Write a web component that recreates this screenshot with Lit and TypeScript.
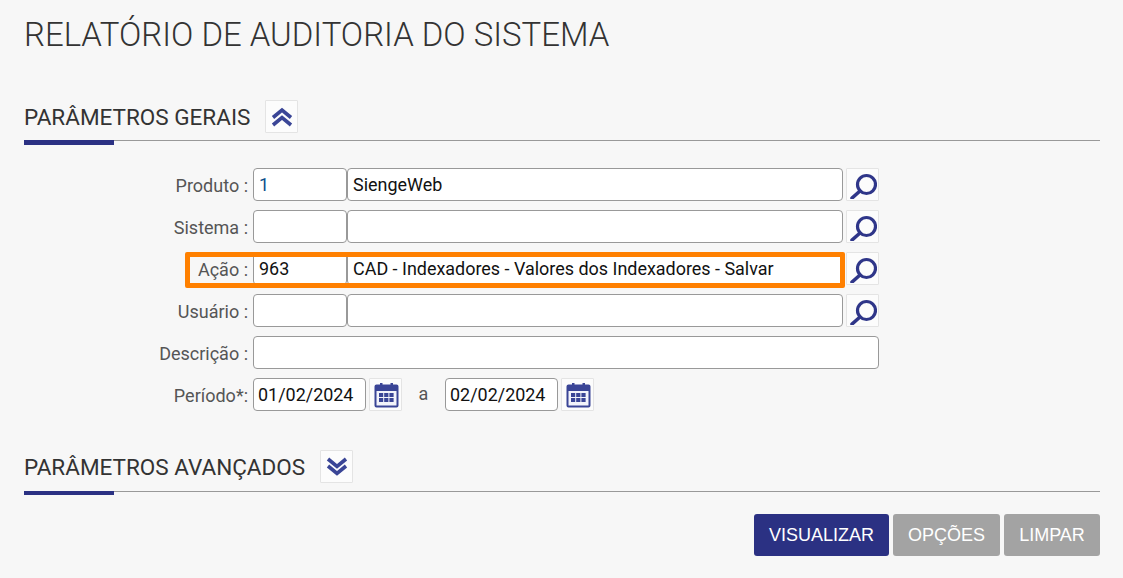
import { LitElement, html, css, svg } from "lit";
import { customElement } from "lit/decorators.js";

const search = svg`<svg width="28" height="28" viewBox="0 0 28 28"><circle cx="17.500" cy="13.500" r="9" fill="none" stroke="#2f3689" stroke-width="3.200"/><path d="M11 20 L3 27" stroke="#2f3689" stroke-width="3.600" stroke-linecap="round"/></svg>`;
const cal = svg`<svg width="28" height="28" viewBox="0 0 28 28"><rect x="3.500" y="4.500" width="22" height="21" rx="1" fill="#f2f3fa" stroke="#3a4596" stroke-width="2"/><rect x="3.500" y="4.500" width="22" height="5.500" fill="#3a4596"/><rect x="8" y="2" width="2.500" height="5" fill="#3a4596"/><rect x="18.500" y="2" width="2.500" height="5" fill="#3a4596"/><g fill="#3a4596"><rect x="7" y="12" width="4.200" height="4"/><rect x="12.200" y="12" width="4.200" height="4"/><rect x="17.400" y="12" width="4.200" height="4"/><rect x="7" y="17" width="4.200" height="4"/><rect x="12.200" y="17" width="4.200" height="4"/><rect x="17.400" y="17" width="4.200" height="4"/></g></svg>`;
const up = svg`<svg width="22" height="22" viewBox="0 0 22 22" fill="none" stroke="#3a4596" stroke-width="3.600"><path d="M2 11.500 L11 4 L20 11.500"/><path d="M2 19 L11 11.500 L20 19"/></svg>`;
const down = svg`<svg width="22" height="22" viewBox="0 0 22 22" fill="none" stroke="#3a4596" stroke-width="3.600"><path d="M2 3 L11 10.500 L20 3"/><path d="M2 10 L11 17.500 L20 10"/></svg>`;

@customElement("app-root")
export class AppRoot extends LitElement {
  static styles = css`
    :host { display: block; width: 1123px; height: 578px; background: #f7f7f7; font-family: Roboto, sans-serif; overflow: hidden; box-sizing: border-box; padding: 0 23px 0 24px; }
    h1 { margin: 0; padding-top: 16px; height: 87px; box-sizing: border-box; font-weight: 300; font-size: 32.950px; line-height: 38px; color: #333; white-space: nowrap; }
    .sec { display: flex; align-items: flex-start; gap: 15px; height: 40px; border-bottom: 1px solid #999; position: relative; margin-top: 13px; }
    .sec h2 { margin: 0; font-weight: 400; font-size: 22.500px; color: #333; line-height: 34px; white-space: nowrap; }
    .sec::after { content: ""; position: absolute; left: 0; bottom: -5px; width: 90px; height: 5px; background: #2b3183; }
    .icon { width: 33px; height: 33px; box-sizing: border-box; border: 1px solid #e4e4e4; background: #fcfcfc; display: flex; align-items: center; justify-content: center; flex: none; border-radius: 1px; }
    .form { display: grid; grid-template-columns: 229px auto; row-gap: 9px; margin-top: 27px; justify-content: start; }
    label { justify-self: end; padding-right: 5px; font-size: 18px; line-height: 35px; height: 33px; color: #555; white-space: nowrap; }
    .row { display: flex; height: 33px; align-items: stretch; position: relative; }
    .in { box-sizing: border-box; height: 33px; background: #fff; border: 1px solid #999; border-radius: 4px; padding-left: 5px; font-size: 17.960px; line-height: 31px; color: #111; white-space: nowrap; overflow: hidden; }
    .code { width: 94px; }
    .name { width: 496px; }
    .desc { width: 626px; }
    .date { width: 113px; padding-left: 4px; }
    .blue { color: #0b4f8a; }
    .row .icon { margin-left: 3px; }
    .a { width: 43px; text-align: center; font-size: 18px; line-height: 31px; color: #555; }
    .hl { position: absolute; left: -68px; top: 0; width: 660px; height: 36px; box-sizing: border-box; border: 5px solid #ff8000; border-radius: 2px; pointer-events: none; }
    .actions { display: flex; justify-content: flex-end; gap: 4px; margin-top: 22px; }
    .btn { height: 42px; box-sizing: border-box; border-radius: 3px; color: #fff; font-family: "Liberation Sans", Arial, sans-serif; font-size: 18px; line-height: 42px; text-align: center; background: #a3a3a3; }
    .v { width: 135px; background: #2b3183; }
    .o { width: 107px; }
    .l { width: 96px; }
    .adv { margin-top: 39px; height: 41px; }
    .adv::after { height: 4px; bottom: -4px; }
  `;

  render() {
    return html`
      <h1>RELATÓRIO DE AUDITORIA DO SISTEMA</h1>
      <div class="sec"><h2>PARÂMETROS GERAIS</h2><div class="icon">${up}</div></div>
      <div class="form">
        <label>Produto :</label>
        <div class="row"><div class="in code blue">1</div><div class="in name">SiengeWeb</div><div class="icon">${search}</div></div>
        <label>Sistema :</label>
        <div class="row"><div class="in code"></div><div class="in name"></div><div class="icon">${search}</div></div>
        <label>Ação :</label>
        <div class="row"><div class="in code">963</div><div class="in name">CAD - Indexadores - Valores dos Indexadores - Salvar</div><div class="icon">${search}</div><div class="hl"></div></div>
        <label>Usuário :</label>
        <div class="row"><div class="in code"></div><div class="in name"></div><div class="icon">${search}</div></div>
        <label>Descrição :</label>
        <div class="row"><div class="in desc"></div></div>
        <label>Período*:</label>
        <div class="row"><div class="in date">01/02/2024</div><div class="icon">${cal}</div><div class="a">a</div><div class="in date">02/02/2024</div><div class="icon">${cal}</div></div>
      </div>
      <div class="sec adv"><h2>PARÂMETROS AVANÇADOS</h2><div class="icon">${down}</div></div>
      <div class="actions"><div class="btn v">VISUALIZAR</div><div class="btn o">OPÇÕES</div><div class="btn l">LIMPAR</div></div>
    `;
  }
}
